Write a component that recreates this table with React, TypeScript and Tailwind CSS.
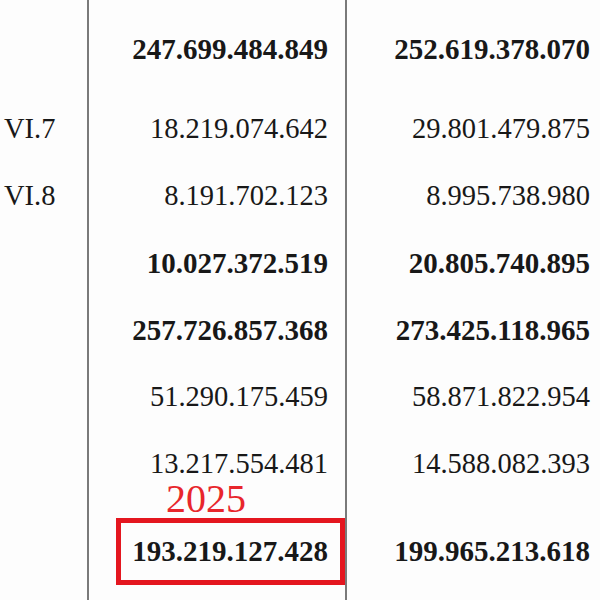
type Row = {
  label?: string;
  cur: string;
  prev: string;
  bold?: boolean;
  highlight?: boolean;
  cls: string;
};

const rows: Row[] = [
  { cur: "247.699.484.849", prev: "252.619.378.070", bold: true, cls: "h-[96px] pt-[15px] pb-[13px]" },
  { label: "VI.7", cur: "18.219.074.642", prev: "29.801.479.875", cls: "h-[67px]" },
  { label: "VI.8", cur: "8.191.702.123", prev: "8.995.738.980", cls: "h-[67px]" },
  { cur: "10.027.372.519", prev: "20.805.740.895", bold: true, cls: "h-[67px]" },
  { cur: "257.726.857.368", prev: "273.425.118.965", bold: true, cls: "h-[67px]" },
  { cur: "51.290.175.459", prev: "58.871.822.954", cls: "h-[67px]" },
  { cur: "13.217.554.481", prev: "14.588.082.393", cls: "h-[87px] pb-[20px]" },
  { cur: "193.219.127.428", prev: "199.965.213.618", bold: true, highlight: true, cls: "h-[82px] pb-[15px]" },
];

function TableRow({ row }: { row: Row }) {
  const weight = row.bold ? "font-bold text-[29px]" : "font-normal text-[28.5px]";
  return (
    <div className="grid grid-cols-[89px_258px_1fr]">
      <div className={`flex items-center border-r-2 border-[#7a7a7a] pl-[4px] ${row.cls}`}>
        <span className="text-[28.5px]">{row.label}</span>
      </div>
      <div className={`flex items-center justify-end border-r-2 border-[#7a7a7a] ${row.cls}`}>
        {row.highlight ? (
          <div className="relative flex h-full w-[229px] items-center justify-end border-[5px] border-[#e4161f] pr-[12px]">
            <span className="absolute left-[45px] top-[-44px] text-[40px] leading-none font-normal text-[#e8262c]">
              2025
            </span>
            <span className={weight}>{row.cur}</span>
          </div>
        ) : (
          <span className={`pr-[17px] ${weight}`}>{row.cur}</span>
        )}
      </div>
      <div className={`flex items-center justify-end pr-[10px] ${row.cls}`}>
        <span className={weight}>{row.prev}</span>
      </div>
    </div>
  );
}

export default function App() {
  return (
    <div className="h-[600px] w-[600px] overflow-hidden bg-[#fdfdfd] font-['Liberation_Serif',serif] leading-none text-[#181818]">
      {rows.map((r, i) => (
        <TableRow key={i} row={r} />
      ))}
    </div>
  );
}
